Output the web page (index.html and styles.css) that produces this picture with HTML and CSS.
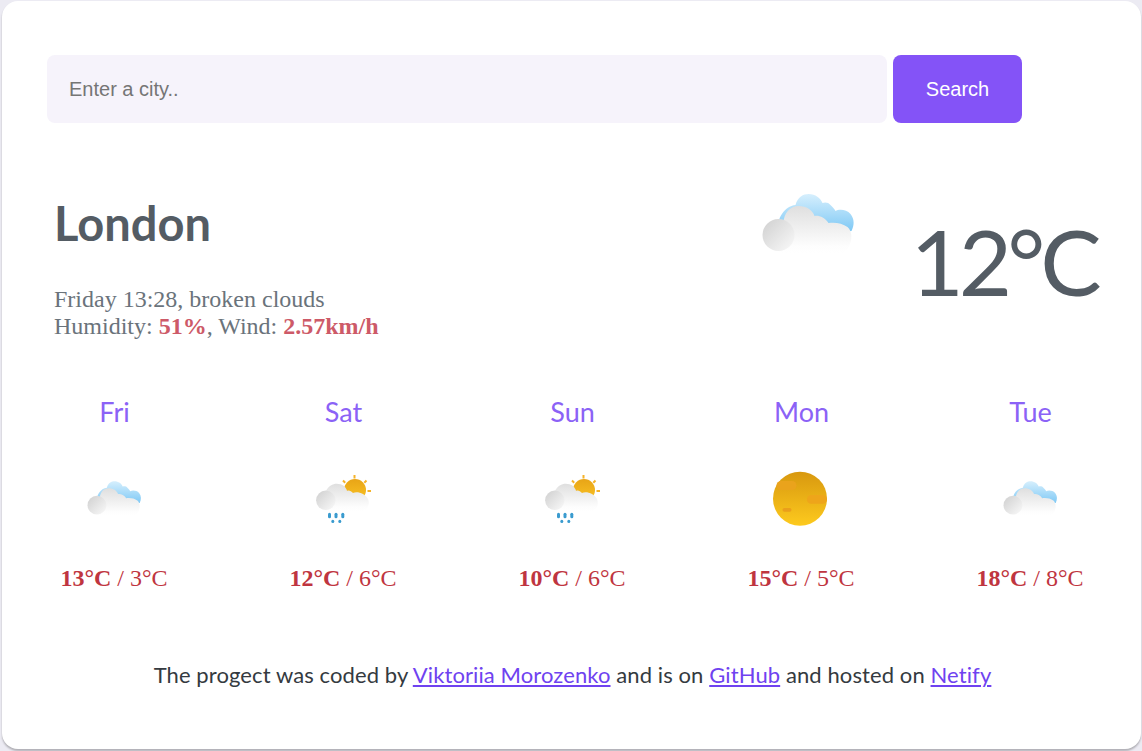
FILE: index.html
```html
<!DOCTYPE html>
<html lang="en">
<head>
<meta charset="utf-8">
<title>Weather</title>
<link rel="stylesheet" href="styles.css">
</head>
<body>
<svg class="defs" width="0" height="0" aria-hidden="true">
  <defs>
    <linearGradient id="blue" x1="0" y1="0" x2="0" y2="1"><stop offset="0" stop-color="#d6effd"/><stop offset="1" stop-color="#74c4f4"/></linearGradient>
    <linearGradient id="white" x1="0" y1="0" x2="0" y2="1"><stop offset="0" stop-color="#dfdfdf"/><stop offset="0.85" stop-color="#fdfdfd"/><stop offset="1" stop-color="#ffffff"/></linearGradient>
    <linearGradient id="grey" x1="0" y1="0" x2="1" y2="1"><stop offset="0" stop-color="#cfcfcf"/><stop offset="1" stop-color="#fafafa"/></linearGradient>
    <linearGradient id="sun" x1="0" y1="0" x2="0" y2="1"><stop offset="0" stop-color="#d8980f"/><stop offset="1" stop-color="#fdca1e"/></linearGradient>
    <linearGradient id="sun-small" x1="0" y1="0" x2="0" y2="1"><stop offset="0" stop-color="#e8a417"/><stop offset="1" stop-color="#fac423"/></linearGradient>
    <symbol id="clouds" viewBox="752.5 167 111 111">
      <path fill="url(#blue)" d="M778 228C776 218 784 205 795 204C797 196 803 193 808 193C815 193 820 197 822 202C824 201 828 201 830 204C832 206 834 208 835 210C838 208 846 208 850 213C854 218 854 224 851 230L790 235Z"/>
      <path fill="url(#white)" d="M783 222C783 212 790 205 798 205C806 205 812 209 814 215C818 214 824 216 828 222C834 221 842 222 847 226C852 230 852 240 848 246C846 250 844 252 840 252L778 252Z"/>
      <circle cx="778" cy="234" r="16" fill="url(#grey)"/>
    </symbol>
    <symbol id="rain" viewBox="0 0 65 65">
      <g stroke="#f5b32a" stroke-width="2" stroke-linecap="butt">
        <path d="M43.500 9V12.500M32 14.500l2.200 2.200M55.500 14.500l-2.200 2.200M56.500 25h3.500"/>
      </g>
      <circle cx="44" cy="24" r="11" fill="url(#sun-small)"/>
      <path fill="url(#white)" d="M15 45V25C19 17 27 16 33 20C35 22 36 24 36 25C38 24 40 25 42 27C47 25 54 28 57 33C59 38 57 43 53 45Z"/>
      <circle cx="14.800" cy="34.300" r="9.700" fill="url(#grey)"/>
      <g fill="#3a9bcf">
        <rect x="17" y="46.700" width="3" height="5.600" rx="1.500"/><rect x="23.500" y="46.700" width="3" height="5.600" rx="1.500"/><rect x="30.300" y="46.700" width="3" height="5.600" rx="1.500"/>
        <rect x="20.300" y="53.700" width="3" height="3.300" rx="1.500"/><rect x="27.300" y="53.700" width="3" height="3.300" rx="1.500"/>
      </g>
    </symbol>
    <symbol id="clear" viewBox="0 0 65 65">
      <circle cx="31" cy="32.700" r="27" fill="url(#sun)"/>
      <rect x="7.500" y="15" width="20" height="9" rx="4.500" fill="#eaa31c"/>
      <rect x="38" y="29" width="20" height="8.700" rx="4.300" fill="#eea51a"/>
      <rect x="13.500" y="42" width="9" height="3.700" rx="1.800" fill="#ea9f1b"/>
    </symbol>
  </defs>
</svg>
<main class="card">
  <form class="search">
    <input class="search-input" type="text" placeholder="Enter a city..">
    <button class="search-button" type="button">Search</button>
  </form>
  <section class="current">
    <div class="place">
      <h1 class="city">London</h1>
      <p class="details">Friday 13:28, broken clouds<br>Humidity: <strong>51%</strong>, Wind: <strong>2.57km/h</strong></p>
    </div>
    <svg class="icon-large"><use href="#clouds"/></svg>
    <div class="temp">12°C</div>
  </section>
  <section class="forecast">
    <div class="day"><div class="day-name">Fri</div><svg class="icon-small"><use href="#clouds"/></svg><div class="range"><strong>13°C</strong> / 3°C</div></div>
    <div class="day"><div class="day-name">Sat</div><svg class="icon-small"><use href="#rain"/></svg><div class="range"><strong>12°C</strong> / 6°C</div></div>
    <div class="day"><div class="day-name">Sun</div><svg class="icon-small"><use href="#rain"/></svg><div class="range"><strong>10°C</strong> / 6°C</div></div>
    <div class="day"><div class="day-name">Mon</div><svg class="icon-small"><use href="#clear"/></svg><div class="range"><strong>15°C</strong> / 5°C</div></div>
    <div class="day"><div class="day-name">Tue</div><svg class="icon-small"><use href="#clouds"/></svg><div class="range"><strong>18°C</strong> / 8°C</div></div>
  </section>
  <footer class="footer">The progect was coded by <a href="#">Viktoriia Morozenko</a> and is on <a href="#">GitHub</a> and hosted on <a href="#">Netify</a></footer>
</main>
</body>
</html>
```
FILE: styles.css
```css
* { box-sizing: border-box; }
html, body { height: 100%; }
body {
  margin: 0;
  padding: 1px 0 0 2px;
  background: #ecebf3;
  overflow: hidden;
}
.defs { position: absolute; }
.card {
  width: 1139px;
  height: 748px;
  padding: 54px 0 0;
  background: #fff;
  border-radius: 16px;
  box-shadow: 0 2px 2px rgba(0, 0, 0, 0.25);
  font-family: "Liberation Serif", serif;
}
.search { display: flex; gap: 6px; margin-left: 45px; }
.search-input {
  width: 840px;
  height: 68px;
  padding: 0 22px;
  border: 0;
  border-radius: 8px;
  background: #f6f3fb;
  font: 20px "Liberation Sans", sans-serif;
  outline: none;
}
.search-input::placeholder { color: #757575; opacity: 1; }
.search-button {
  width: 129px;
  height: 68px;
  border: 0;
  border-radius: 8px;
  background: #8453f7;
  color: #fff;
  font: 20px "Liberation Sans", sans-serif;
}
.current {
  display: flex;
  align-items: flex-start;
  margin-top: 68px;
  margin-left: 52px;
  height: 205px;
}
.place { width: 698.500px; }
.city {
  margin: 0;
  font: bold 47px/64px "Lato", sans-serif;
  color: #545c64;
}
.details {
  margin: 31px 0 0;
  font-size: 24px;
  line-height: 27px;
  color: #6a737b;
}
.details strong { color: #cd5a68; }
.icon-large { width: 111px; height: 111px; margin-top: -23px; }
.temp {
  margin-left: 47px;
  margin-top: 10px;
  font: 92px/120px "Lato", sans-serif;
  letter-spacing: -5px;
  color: #545c64;
}
.forecast {
  display: grid;
  grid-template-columns: repeat(5, 229px);
  margin-left: -2px;
  text-align: center;
}
.day { display: flex; flex-direction: column; align-items: center; }
.day-name { font: 27px/32px "Lato", sans-serif; color: #8b62f6; }
.icon-small { width: 65px; height: 65px; margin-top: 38px; }
.range { margin-top: 33px; margin-right: 1px; font-size: 24px; line-height: 28px; color: #bf3540; }
.footer {
  margin-top: 69px;
  margin-left: -2px;
  width: 1145px;
  text-align: center;
  font: 22px/28px "Lato", sans-serif;
  letter-spacing: 0.1px;
  color: #343a40;
}
.footer a { color: #6f42f0; }
```
